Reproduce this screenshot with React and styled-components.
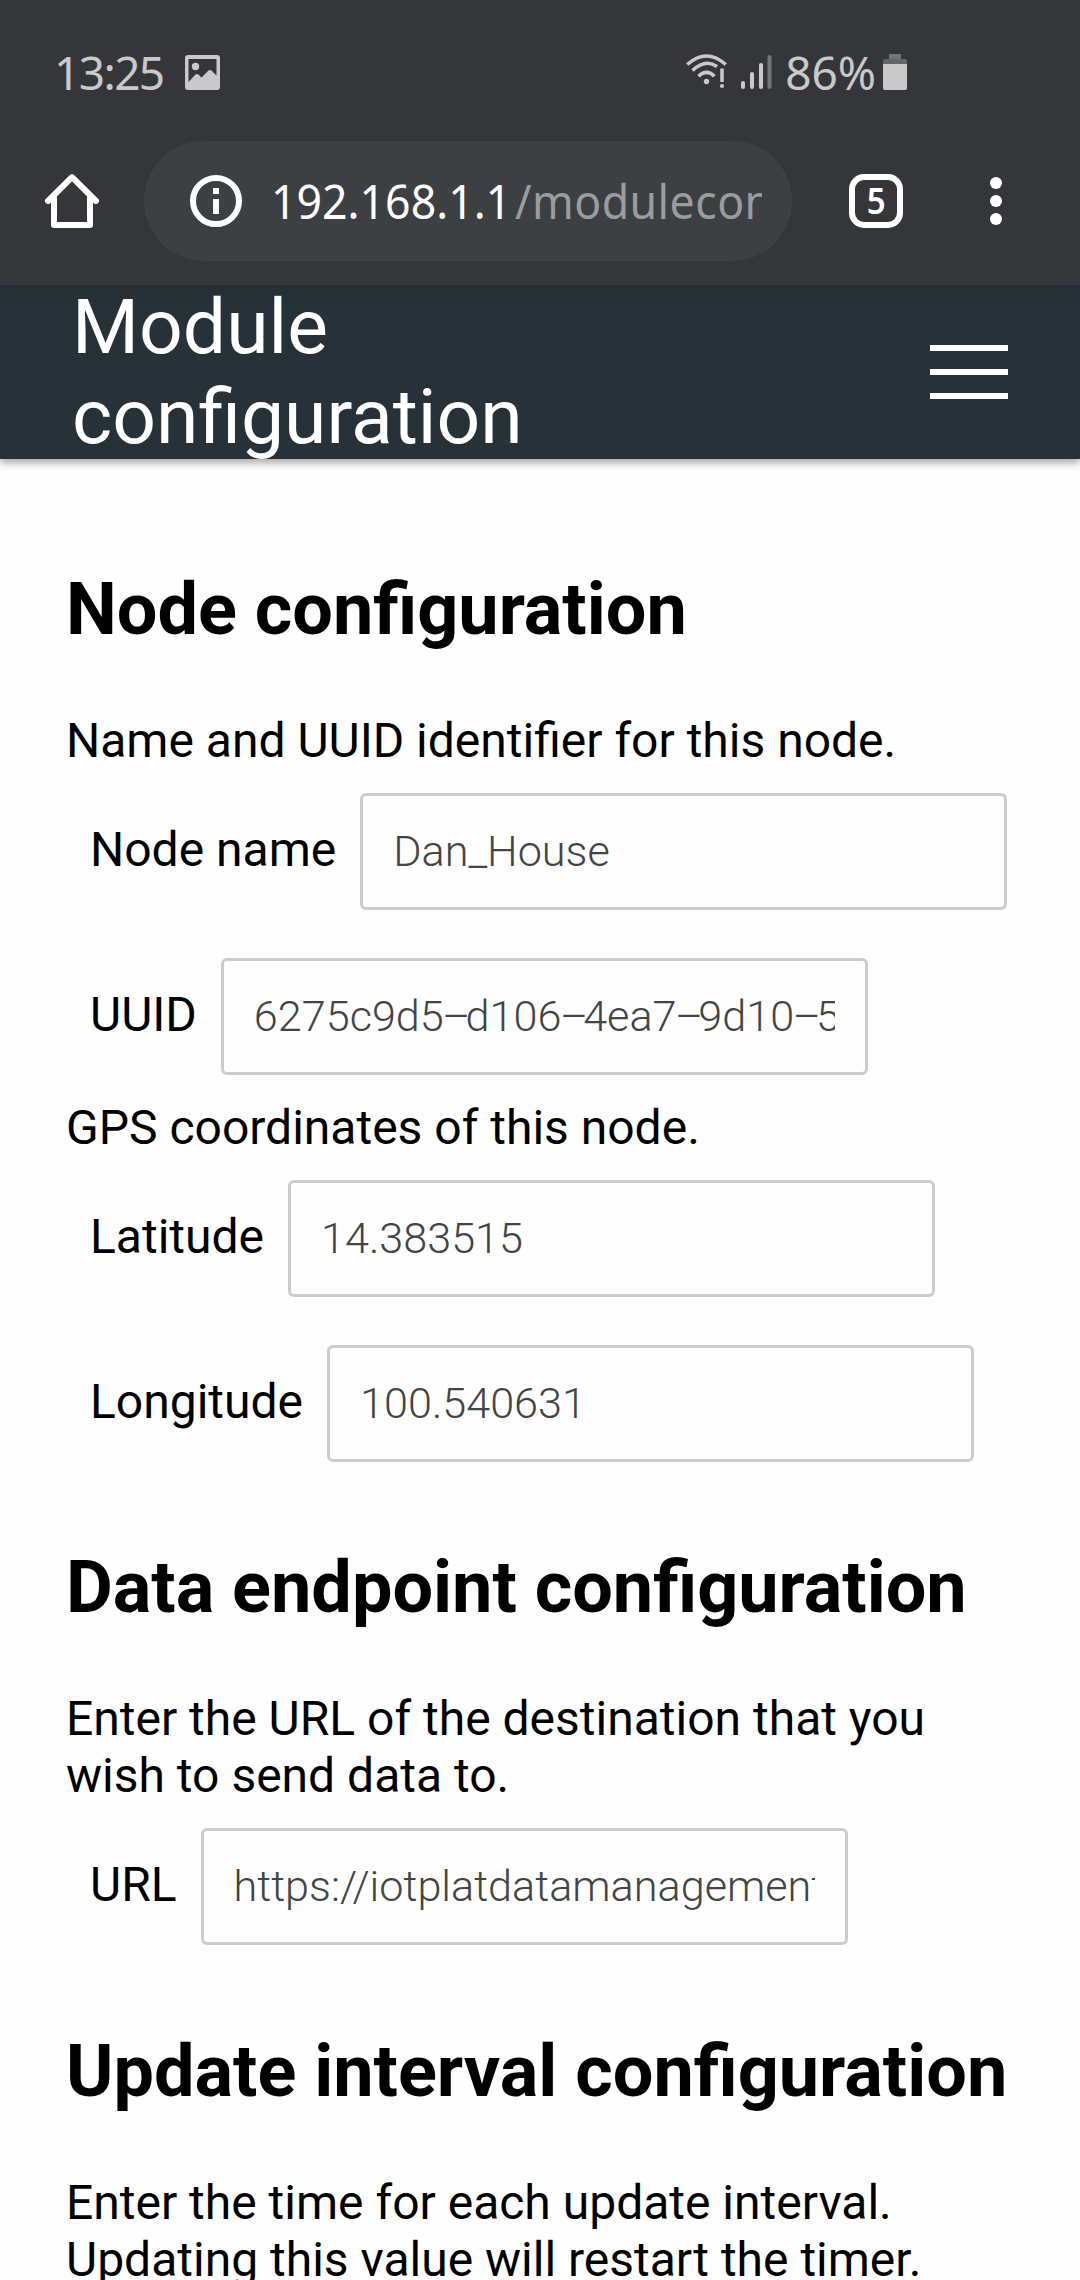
import React from "react";
import styled, { createGlobalStyle } from "styled-components";

const GlobalStyle = createGlobalStyle`
  * { box-sizing: border-box; }
  body { margin: 0; background: #fefefe; overflow: hidden; }
`;

const Screen = styled.div`
  width: 1080px;
  height: 2280px;
  overflow: hidden;
  display: flex;
  flex-direction: column;
  background: #fefefe;
  color: #000;
  font-family: Roboto, sans-serif;
  font-size: 48px;
`;

const Chrome = styled.div`
  position: relative;
  z-index: 1;
  flex: none;
  height: 285px;
  background: #35363a;
  box-shadow: 0 0 24px rgba(0, 0, 0, 0.12);
  font-family: "Noto Sans", sans-serif;
`;

const StatusBar = styled.div`
  display: flex;
  align-items: center;
  justify-content: space-between;
  height: 141px;
  padding: 3px 173px 0 54px;
  color: #c9c9c9;
  font-size: 46px;
  line-height: 60px;
`;

const StatusGroup = styled.div`
  display: flex;
  align-items: center;
  gap: ${(p) => p.$gap}px;
`;

const StatusText = styled.span`
  letter-spacing: ${(p) => p.$spacing}px;
`;

const Toolbar = styled.div`
  display: flex;
  align-items: center;
  height: 120px;
  padding-left: 42px;
`;

const AddressBar = styled.div`
  display: flex;
  align-items: center;
  width: 648px;
  height: 120px;
  margin: 0 54px 0 42px;
  padding: 0 30px 0 43px;
  border-radius: 60px;
  background: #3c4043;
`;

const Address = styled.div`
  flex: 1;
  min-width: 0;
  margin-left: 24px;
  overflow: hidden;
  white-space: nowrap;
  color: #fff;
  font-size: 48px;
  line-height: 66px;
`;

const AddressText = styled.div`
  width: max-content;
  transform: scaleX(0.93);
  transform-origin: left;
`;

const Path = styled.span`
  margin-left: 4px;
  color: #9b9c9e;
  letter-spacing: 0.5px;
`;

const TabCount = styled.div`
  display: flex;
  align-items: center;
  justify-content: center;
  width: 54px;
  height: 54px;
  margin: 0 84px 0 3px;
  border: 6px solid #fff;
  border-radius: 15px;
  color: #fff;
  font-size: 36px;
  font-weight: 600;
  line-height: 42px;
`;

const TabNumber = styled.span`
  transform: scaleX(0.92);
`;

const Header = styled.header`
  flex: none;
  display: flex;
  align-items: center;
  justify-content: space-between;
  height: 174px;
  padding: 0 72px;
  background: #273238;
  box-shadow: 0 3px 9px rgba(0, 0, 0, 0.4);
`;

const Title = styled.h1`
  width: 500px;
  margin: 0;
  color: #fff;
  font-size: 76.8px;
  font-weight: 400;
  line-height: 90px;
`;

const MenuButton = styled.div`
  display: flex;
  flex-direction: column;
  gap: 18px;
  width: 78px;
`;

const MenuBar = styled.span`
  height: 6px;
  background: #fff;
`;

const Content = styled.main`
  display: flex;
  flex-direction: column;
  padding: 48px 66px 0;
`;

const Heading = styled.h2`
  margin: 0.83em 0;
  font-size: 72px;
  font-weight: 700;
  line-height: 85px;
  white-space: nowrap;
`;

const Text = styled.p`
  margin: 0;
  line-height: 57px;
`;

const Field = styled.div`
  display: flex;
  align-items: baseline;
  gap: 24px;
  height: 117px;
  margin: 24px 0;
  padding-left: 24px;
`;

const InputBox = styled.div`
  width: 647px;
  height: 117px;
  padding: 0 30px;
  border: 3px solid #ccc;
  border-radius: 6px;
  color: #444;
  font-size: 43.2px;
  font-weight: 300;
  line-height: 111px;
`;

const InputValue = styled.div`
  overflow: hidden;
  white-space: nowrap;
`;

const Dash = styled.span`
  margin-left: -1.5px;
  letter-spacing: -4.9px;
`;

const ImageIcon = () => (
  <svg width="35" height="35" viewBox="0 0 35 35">
    <path fill="#c9c9c9" fillRule="evenodd" d="M3 0h29a3 3 0 0 1 3 3v29a3 3 0 0 1-3 3H3a3 3 0 0 1-3-3V3a3 3 0 0 1 3-3zM3.500 4v23l6.500-7q2-2 4 0l2.500 2.500 6.500-6.500q2-2 4 0l4.500 4.500V4z" />
    <circle cx="10.500" cy="11.500" r="3.700" fill="#c9c9c9" />
  </svg>
);

const WifiIcon = () => (
  <svg width="42" height="36" viewBox="0 0 42 36" fill="none" stroke="#c9c9c9" strokeWidth="3.500">
    <path d="M1.200 10.500Q20.500-6.500 39.800 10.500" />
    <path d="M6.500 16.500Q19.500 4.500 31 12.500" />
    <path d="M12.500 22.200Q20.500 14.500 28.500 22.200" />
    <circle cx="20.500" cy="27.500" r="2.700" fill="#c9c9c9" stroke="none" />
    <path d="M36 14.500V28" />
    <circle cx="36" cy="32" r="2.100" fill="#c9c9c9" stroke="none" />
  </svg>
);

const SignalIcon = () => (
  <svg width="31" height="36" viewBox="0 0 31 36" fill="#c9c9c9">
    <rect x="0" y="27" width="4" height="8" rx="2" />
    <rect x="9" y="18" width="4" height="17" rx="2" />
    <rect x="18" y="9" width="4" height="26" rx="2" />
    <rect x="26.500" y="1" width="4" height="34" rx="2" fill="#737477" />
  </svg>
);

const BatteryIcon = () => (
  <svg width="24" height="36" viewBox="0 0 24 36">
    <path fill="#737477" d="M6 0h12v5H6z" />
    <path fill="#656669" d="M2 5h20q2 0 2 2v3H0V7q0-2 2-2z" />
    <path fill="#c9c9c9" d="M0 10h24v24q0 2-2 2H2q-2 0-2-2z" />
  </svg>
);

const HomeIcon = () => (
  <svg width="60" height="60" viewBox="0 0 60 60" fill="none" stroke="#fff" strokeWidth="6" strokeLinecap="round" strokeLinejoin="round">
    <path d="M6 30L30 6.200 54 30" />
    <path d="M12 27V54H48V27" />
  </svg>
);

const InfoIcon = () => (
  <svg width="60" height="60" viewBox="0 0 60 60" fill="#fff">
    <circle cx="29" cy="30" r="23" fill="none" stroke="#fff" strokeWidth="6" />
    <path d="M26 17h6v6h-6zM26 28h6v15h-6z" />
  </svg>
);

const MoreIcon = () => (
  <svg width="18" height="60" viewBox="0 0 18 60" fill="#fff">
    <circle cx="9" cy="12" r="6" />
    <circle cx="9" cy="30" r="6" />
    <circle cx="9" cy="48" r="6" />
  </svg>
);

const FormField = ({ label, value }) => (
  <Field>
    <span>{label}</span>
    <InputBox>
      <InputValue>
        {value.split("–").map((part, i) => (
          <React.Fragment key={i}>
            {i > 0 && <Dash>–</Dash>}
            {part}
          </React.Fragment>
        ))}
      </InputValue>
    </InputBox>
  </Field>
);

export default function App() {
  return (
    <Screen>
      <GlobalStyle />
      <Chrome>
        <StatusBar>
          <StatusGroup $gap={21}>
            <StatusText $spacing={-1.6}>13:25</StatusText>
            <ImageIcon />
          </StatusGroup>
          <StatusGroup $gap={13}>
            <WifiIcon />
            <SignalIcon />
            <StatusGroup $gap={7}>
              <StatusText $spacing={0}>86%</StatusText>
              <BatteryIcon />
            </StatusGroup>
          </StatusGroup>
        </StatusBar>
        <Toolbar>
          <HomeIcon />
          <AddressBar>
            <InfoIcon />
            <Address>
              <AddressText>
                192.168.1.1<Path>/modulecon</Path>
              </AddressText>
            </Address>
          </AddressBar>
          <TabCount>
            <TabNumber>5</TabNumber>
          </TabCount>
          <MoreIcon />
        </Toolbar>
      </Chrome>
      <Header>
        <Title>Module configuration</Title>
        <MenuButton>
          <MenuBar />
          <MenuBar />
          <MenuBar />
        </MenuButton>
      </Header>
      <Content>
        <Heading>Node configuration</Heading>
        <Text>Name and UUID identifier for this node.</Text>
        <FormField label="Node name" value="Dan_House" />
        <FormField label="UUID" value="6275c9d5–d106–4ea7–9d10–5" />
        <Text>GPS coordinates of this node.</Text>
        <FormField label="Latitude" value="14.383515" />
        <FormField label="Longitude" value="100.540631" />
        <Heading>Data endpoint configuration</Heading>
        <Text>Enter the URL of the destination that you wish to send data to.</Text>
        <FormField label="URL" value="https://iotplatdatamanagement" />
        <Heading>Update interval configuration</Heading>
        <Text>Enter the time for each update interval. Updating this value will restart the timer.</Text>
      </Content>
    </Screen>
  );
}
